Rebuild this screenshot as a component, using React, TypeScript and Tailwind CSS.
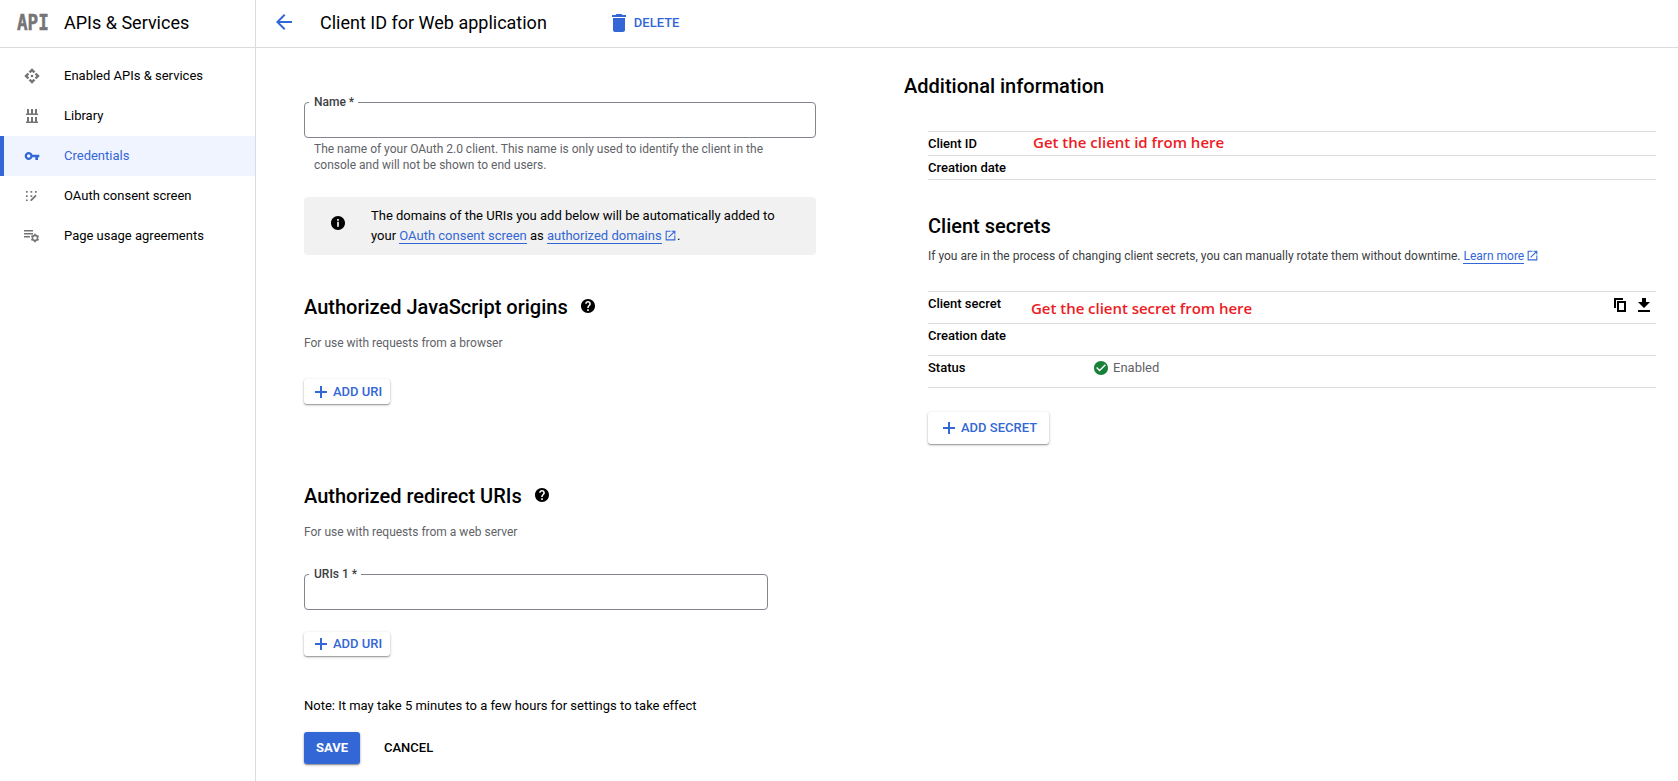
import type { ReactNode } from "react";

type IconProps = { d: string; size: number; className?: string };

function Icon({ d, size, className = "" }: IconProps) {
  return (
    <svg width={size} height={size} viewBox="0 0 24 24" fill="currentColor" className={`shrink-0 ${className}`}>
      <path d={d} />
    </svg>
  );
}

const ICONS = {
  back: "M20 11H7.83l5.59-5.59L12 4l-8 8 8 8 1.41-1.41L7.83 13H20v-2z",
  trash: "M6 19c0 1.1.9 2 2 2h8c1.1 0 2-.9 2-2V7H6v12zM19 4h-3.500l-1-1h-5l-1 1H5v2h14V4z",
  key: "M12.65 10C11.83 7.67 9.610 6 7 6c-3.310 0-6 2.690-6 6s2.690 6 6 6c2.610 0 4.830-1.670 5.650-4H17v4h4v-4h2v-4H12.650zM7 14.500c-1.380 0-2.500-1.120-2.500-2.500s1.120-2.500 2.500-2.500 2.500 1.120 2.500 2.500-1.120 2.500-2.500 2.500z",
  info: "M12 0C5.400 0 0 5.400 0 12s5.400 12 12 12 12-5.400 12-12S18.600 0 12 0zm1.500 18.500h-3v-8.500h3v8.500zm0-10.500h-3V5h3v3z",
  help: "M12 0C5.370 0 0 5.370 0 12s5.370 12 12 12 12-5.370 12-12S18.630 0 12 0zm1.400 20.400h-2.800v-2.800h2.800v2.800zm2.500-9.300l-1.100 1.100c-.9.900-1.400 1.600-1.400 3.400h-2.800v-.7c0-1.300.5-2.500 1.400-3.400l1.500-1.500c.4-.4.700-1 .7-1.700 0-1.300-1-2.300-2.300-2.300S9.700 7 9.700 8.300H7.100C7.100 5.600 9.300 3.500 12 3.500s4.900 2.100 4.900 4.800c0 1.100-.4 2.100-1 2.800z",
  open: "M19 19H5V5h7V3H3v18h18v-9h-2v7zM14 3v2h3.590l-9.830 9.830 1.410 1.410L19 6.410V10h2V3h-7z",
  check: "M12 0C5.370 0 0 5.370 0 12s5.370 12 12 12 12-5.370 12-12S18.630 0 12 0zm-2.400 18l-6-6 1.690-1.690 4.310 4.290 9.110-9.110L20.400 7.200 9.600 18z",
};

function ApiIcon() {
  return (
    <svg width="16" height="16" viewBox="0 0 16 16" fill="currentColor">
      <path d="M8 .3L11.300 3.600 9.700 5.300 8 3.700 6.300 5.300 4.700 3.600zM8 15.700L11.300 12.400 9.700 10.700 8 12.300 6.300 10.700 4.700 12.400zM.3 8L3.600 4.700 5.300 6.300 3.700 8 5.300 9.700 3.600 11.300zM15.700 8L12.400 4.700 10.700 6.300 12.300 8 10.700 9.700 12.400 11.300z" />
      <circle cx="8" cy="8" r="1.300" />
    </svg>
  );
}

function LibraryIcon() {
  return (
    <svg width="12" height="14" viewBox="0 0 12 14" fill="currentColor">
      <path d="M0 4.500h12V6H0zM1 0h2v5H1zM5 0h2v5H5zM9 0h2v5H9zM0 12.500h12V14H0zM1 8h2v5H1zM5 8h2v5H5zM9 8h2v5H9z" />
    </svg>
  );
}

function ConsentIcon() {
  return (
    <svg width="12" height="12" viewBox="0 0 12 12" fill="currentColor" className="mr-px">
      <path d="M0 1h1.700v1.700H0zM4.500 1h1.700v1.700H4.500zM9 1h1.700v1.700H9zM0 5.200h1.700v1.700H0zM4.500 5.200h1.700v1.700H4.500zM0 9.400h1.700v1.700H0zM4.500 11.100V9.400L9.400 4.700l1.200 1.200-4.900 5.200z" />
    </svg>
  );
}

function AgreementIcon() {
  return (
    <svg width="16" height="14" viewBox="0 0 16 14" fill="none" stroke="currentColor">
      <path d="M0 1.750h9M0 4.750h9M0 7.750h6" strokeWidth="1.500" />
      <circle cx="11" cy="9" r="2.600" strokeWidth="1.600" />
      <path d="M11 4.800v1.400M11 11.800v1.400M7.300 6.900l1.300.7M13.400 10.400l1.300.7M7.300 11.100l1.300-.7M13.400 7.600l1.300-.7" strokeWidth="1.600" />
    </svg>
  );
}

function PlusIcon() {
  return (
    <svg width="12" height="12" viewBox="0 0 12 12" className="shrink-0" fill="none" stroke="currentColor" strokeWidth="2">
      <path d="M6 0v12M0 6h12" />
    </svg>
  );
}

const NAV: { label: string; icon: ReactNode; active?: boolean }[] = [
  { label: "Enabled APIs & services", icon: <ApiIcon /> },
  { label: "Library", icon: <LibraryIcon /> },
  { label: "Credentials", icon: <Icon d={ICONS.key} size={16} />, active: true },
  { label: "OAuth consent screen", icon: <ConsentIcon /> },
  { label: "Page usage agreements", icon: <AgreementIcon /> },
];

function Sidebar() {
  return (
    <aside className="flex w-64 shrink-0 flex-col border-r border-[#dadce0]">
      <div className="flex h-12 items-center border-b border-[#dadce0] pb-0.5">
        <div className="flex w-16 justify-center pt-px pl-0.5">
          <span className="scale-x-[0.8] font-['DejaVu_Sans_Mono'] text-[22px] leading-none font-bold text-[#757575] [-webkit-text-stroke:0.5px_#757575]">
            API
          </span>
        </div>
        <h1 className="text-[18px]">APIs &amp; Services</h1>
      </div>
      <nav className="flex flex-col pt-2">
        {NAV.map((item) => (
          <a
            key={item.label}
            className={`flex h-10 items-center text-[13px] ${
              item.active ? "border-l-4 border-[#3367d6] bg-[#f0f4fe] text-[#3367d6]" : "border-l-4 border-transparent"
            }`}
          >
            <span className={`flex w-[60px] justify-center pr-1 ${item.active ? "" : "text-[#757575]"}`}>{item.icon}</span>
            {item.label}
          </a>
        ))}
      </nav>
    </aside>
  );
}

function OutlinedField({ label, className }: { label: string; className: string }) {
  return (
    <div className={`relative h-9 rounded border border-[#80868b] ${className}`}>
      <label className="absolute -top-2 left-1 bg-white pr-1 pl-[5px] text-[12px] leading-[14px] font-medium text-[#3c4043]">{label}</label>
    </div>
  );
}

function AddButton({ label, className }: { label: string; className: string }) {
  return (
    <button
      className={`flex items-center rounded-[3px] bg-white text-[13px] font-medium whitespace-nowrap text-[#3367d6] shadow-[0_1px_3px_rgba(0,0,0,0.25),0_1px_1px_rgba(0,0,0,0.25)] ${className}`}
    >
      <PlusIcon />
      {label}
    </button>
  );
}

function Link({ children }: { children: ReactNode }) {
  return <a className="border-b border-[#3367d6] text-[#3367d6]">{children}</a>;
}

function SectionTitle({ children }: { children: ReactNode }) {
  return (
    <h2 className="flex h-6 items-center text-[20px] font-medium">
      {children}
      <Icon d={ICONS.help} size={14} className="mb-0.5 ml-[13px]" />
    </h2>
  );
}

function ClientForm() {
  return (
    <section className="w-[512px]">
      <OutlinedField label="Name *" className="mt-[54px] w-[512px]" />
      <p className="mt-[3px] ml-2.5 text-[12px] leading-4 text-[#5f6368]">
        The name of your OAuth 2.0 client. This name is only used to identify the client in the
        <br />
        console and will not be shown to end users.
      </p>

      <div className="mt-6 flex h-[58px] rounded bg-[#f1f1f1] pt-[9px] pl-[27px] text-[13px] leading-5">
        <Icon d={ICONS.info} size={14} className="mt-[10px] mr-[26px]" />
        <p>
          The domains of the URIs you add below will be automatically added to
          <br />
          your <Link>OAuth consent screen</Link> as <Link>authorized domains</Link>{" "}
          <Icon d={ICONS.open} size={13} className="mb-0.5 -ml-px inline text-[#3367d6]" />.
        </p>
      </div>

      <div className="mt-10">
        <SectionTitle>Authorized JavaScript origins</SectionTitle>
      </div>
      <p className="mt-4 text-[12px] leading-4 text-[#5f6368]">For use with requests from a browser</p>
      <AddButton label="ADD URI" className="mt-7 h-[25px] w-[86px] gap-1.5 pl-[11px]" />

      <div className="mt-20">
        <SectionTitle>Authorized redirect URIs</SectionTitle>
      </div>
      <p className="mt-4 text-[12px] leading-4 text-[#5f6368]">For use with requests from a web server</p>
      <OutlinedField label="URIs 1 *" className="mt-[34px] w-[464px]" />
      <AddButton label="ADD URI" className="mt-[22px] mb-10 h-6 w-[86px] gap-1.5 pl-[11px]" />

      <p className="text-[13px] leading-5">Note: It may take 5 minutes to a few hours for settings to take effect</p>
      <div className="mt-4 flex h-8 items-center gap-6 text-[13px] font-medium">
        <button className="h-8 w-14 rounded-[3px] bg-[#3367d6] font-bold text-white shadow-[0_1px_3px_rgba(0,0,0,0.3),0_1px_1px_rgba(0,0,0,0.25)]">
          SAVE
        </button>
        <button>CANCEL</button>
      </div>
    </section>
  );
}

function Row({ label, className, children }: { label: string; className: string; children?: ReactNode }) {
  return (
    <div className={`flex border-b border-[#dadce0] text-[13px] ${className}`}>
      <span className="w-[103px] shrink-0 font-medium">{label}</span>
      {children}
    </div>
  );
}

function AdditionalInfo() {
  return (
    <section className="w-[752px] pt-[26px]">
      <h2 className="h-6 text-[20px] leading-6 font-medium">Additional information</h2>
      <div className="ml-6">
        <div className="mt-[33px] border-t border-[#dadce0]">
          <Row label="Client ID" className="h-6 leading-6">
            <span className="pl-0.5 font-['Open_Sans'] text-[15px] leading-[21px] font-semibold text-[#ed1c24]">Get the client id from here</span>
          </Row>
          <Row label="Creation date" className="h-6 leading-6" />
        </div>

        <h2 className="mt-[34px] h-6 text-[20px] leading-6 font-medium">Client secrets</h2>
        <p className="mt-[10px] text-[12px] leading-4 text-[#3c4043]">
          If you are in the process of changing client secrets, you can manually rotate them without downtime. <Link>Learn more</Link>{" "}
          <Icon d={ICONS.open} size={13} className="mb-0.5 -ml-px inline text-[#3367d6]" />
        </p>

        <div className="mt-[27px] border-t border-[#dadce0]">
          <Row label="Client secret" className="h-8 leading-6">
            <span className="pt-1 font-['Open_Sans'] text-[15px] font-semibold tracking-[-0.03px] text-[#ed1c24]">
              Get the client secret from here
            </span>
            <span className="mt-1.5 mr-1.5 ml-auto flex gap-3">
              <svg width="12" height="14" viewBox="0 0 12 14" fill="none" stroke="currentColor">
                <path d="M9 1H1V10" strokeWidth="2" />
                <path d="M4 4h7v9H4z" strokeWidth="2" />
              </svg>
              <svg width="12" height="14" viewBox="0 0 12 14" fill="currentColor">
                <path d="M4 0h4v4h4l-6 6-6-6h4zM0 12h12v2H0z" />
              </svg>
            </span>
          </Row>
          <Row label="Creation date" className="h-8 leading-6" />
          <Row label="Status" className="h-8 leading-6">
            <span className="ml-[63px] flex h-6 items-center gap-[5px] text-[#5f6368]">
              <Icon d={ICONS.check} size={14} className="text-[#188038]" />
              Enabled
            </span>
          </Row>
        </div>
        <AddButton label="ADD SECRET" className="mt-6 h-8 w-[121px] gap-1.5 pb-px pl-[15px]" />
      </div>
    </section>
  );
}

export default function App() {
  return (
    <div className="flex h-[781px] w-[1678px] overflow-hidden bg-white font-[Roboto,sans-serif] text-black">
      <Sidebar />
      <div className="flex flex-1 flex-col">
        <header className="flex h-12 shrink-0 items-center border-b border-[#dadce0] pb-0.5 pl-[18px]">
          <Icon d={ICONS.back} size={24} className="mb-0.5 -ml-0.5 text-[#3367d6]" />
          <h1 className="ml-6 text-[18px]">Client ID for Web application</h1>
          <button className="ml-[60px] flex items-center gap-[3px] text-[13px] font-medium text-[#3367d6]">
            <Icon d={ICONS.trash} size={24} />
            DELETE
          </button>
        </header>
        <main className="flex gap-[88px] pl-12">
          <ClientForm />
          <AdditionalInfo />
        </main>
      </div>
    </div>
  );
}
